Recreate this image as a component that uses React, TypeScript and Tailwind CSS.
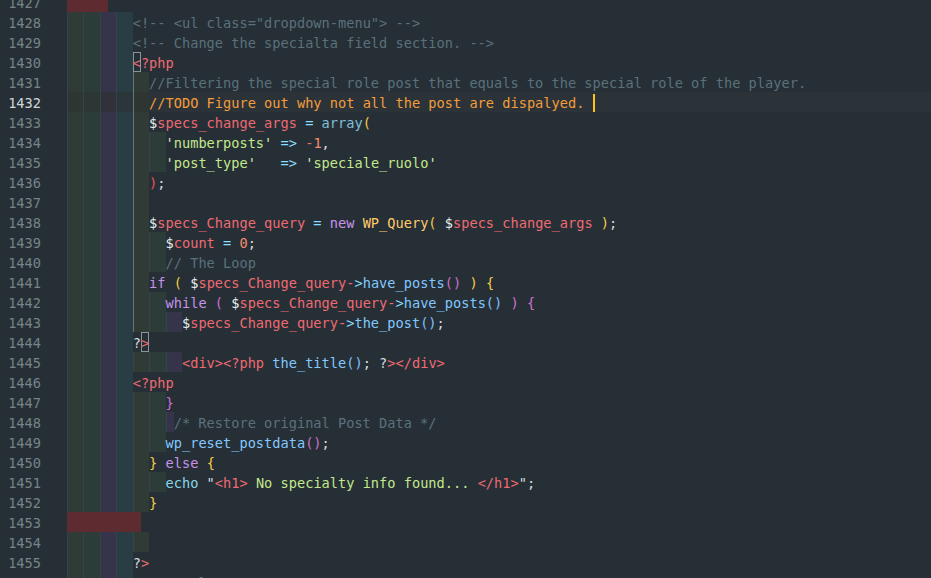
import React from "react";

type Tok = [string, string, boolean?];

const K: Record<string, string> = {
  t: "text-[#d6dee0]",
  d: "text-[#e6eeee]",
  v: "text-[#ef6a73]",
  o: "text-[#89ddff]",
  c: "text-[#5a717c]",
  todo: "text-[#f39c3c]",
  k: "text-[#c792ea]",
  f: "text-[#82c8ff]",
  a: "text-[#80c0d8]",
  s: "text-[#c3e88d]",
  q: "text-[#d8e8c4]",
  n: "text-[#f78c6c]",
  y: "text-[#f7cc45]",
  p: "text-[#d070d0]",
  b: "text-[#7ec0ff]",
  h: "text-[#ef6a73]",
  r: "text-[#e8505c]",
  e: "text-[#89d8e8]",
  cls: "text-[#ffcb6b]",
};

// indent rainbow
const bands = ["bg-[#2f3b34]", "bg-[#2b3c39]", "bg-[#35344a]", "bg-[#293d44]"];
const bandsCur = ["bg-[#2e3632]", "bg-[#2c3735]", "bg-[#303139]", "bg-[#2b363a]"];

type LineDef = {
  n: number;
  ind: number;
  red?: boolean;
  act?: boolean;
  cur?: boolean;
  toks?: Tok[];
};

const lines: LineDef[] = [
  { n: 1427, ind: 5, red: true },
  { n: 1428, ind: 8, toks: [['<!-- <ul class="dropdown-menu"> -->', "c"]] },
  { n: 1429, ind: 8, toks: [["<!-- Change the specialta field section. -->", "c"]] },
  { n: 1430, ind: 8, toks: [["<", "h", true], ["?php", "h"]] },
  {
    n: 1431,
    ind: 10,
    act: true,
    toks: [["//Filtering the special role post that equals to the special role of the player.", "c"]],
  },
  { n: 1432, ind: 10, act: true, cur: true, toks: [["//TODO Figure out why not all the post are dispalyed. ", "todo"]] },
  {
    n: 1433,
    ind: 10,
    act: true,
    toks: [["$", "d"], ["specs_change_args", "v"], [" = ", "o"], ["array", "a"], ["(", "y"]],
  },
  {
    n: 1434,
    ind: 12,
    act: true,
    toks: [["'", "q"], ["numberposts", "s"], ["'", "q"], [" => ", "o"], ["-", "v"], ["1", "n"], [",", "t"]],
  },
  {
    n: 1435,
    ind: 12,
    act: true,
    toks: [["'", "q"], ["post_type", "s"], ["'", "q"], ["   => ", "o"], ["'", "q"], ["speciale_ruolo", "s"], ["'", "q"]],
  },
  { n: 1436, ind: 10, act: true, toks: [[")", "r"], [";", "t"]] },
  { n: 1437, ind: 10, act: true },
  {
    n: 1438,
    ind: 10,
    act: true,
    toks: [
      ["$", "d"], ["specs_Change_query", "v"], [" = ", "o"], ["new", "k"], [" ", "t"], ["WP_Query", "cls"],
      ["(", "y"], [" ", "t"], ["$", "d"], ["specs_change_args", "v"], [" ", "t"], [")", "y"], [";", "t"],
    ],
  },
  { n: 1439, ind: 12, act: true, toks: [["$", "d"], ["count", "v"], [" = ", "o"], ["0", "n"], [";", "t"]] },
  { n: 1440, ind: 12, act: true, toks: [["// The Loop", "c"]] },
  {
    n: 1441,
    ind: 10,
    act: true,
    toks: [
      ["if", "k"], [" ", "t"], ["(", "y"], [" ", "t"], ["$", "d"], ["specs_Change_query", "v"], ["-", "v"], [">", "o"],
      ["have_posts", "f"], ["()", "p"], [" ", "t"], [")", "y"], [" ", "t"], ["{", "y"],
    ],
  },
  {
    n: 1442,
    ind: 12,
    act: true,
    toks: [
      ["while", "k"], [" ", "t"], ["(", "p"], [" ", "t"], ["$", "d"], ["specs_Change_query", "v"], ["-", "v"], [">", "o"],
      ["have_posts", "f"], ["()", "b"], [" ", "t"], [")", "p"], [" ", "t"], ["{", "p"],
    ],
  },
  {
    n: 1443,
    ind: 14,
    act: true,
    toks: [["$", "d"], ["specs_Change_query", "v"], ["-", "v"], [">", "o"], ["the_post", "f"], ["()", "b"], [";", "t"]],
  },
  { n: 1444, ind: 8, toks: [["?", "t"], [">", "h", true]] },
  {
    n: 1445,
    ind: 14,
    toks: [
      ["<div>", "h"], ["<?php", "h"], [" ", "t"], ["the_title", "f"], ["()", "b"], [";", "t"], [" ", "t"],
      ["?", "t"], [">", "h"], ["</div>", "h"],
    ],
  },
  { n: 1446, ind: 8, toks: [["<?php", "h"]] },
  { n: 1447, ind: 12, toks: [["}", "p"]] },
  { n: 1448, ind: 13, toks: [["/* Restore original Post Data */", "c"]] },
  { n: 1449, ind: 12, toks: [["wp_reset_postdata", "f"], ["()", "p"], [";", "t"]] },
  { n: 1450, ind: 10, toks: [["}", "y"], [" ", "t"], ["else", "k"], [" ", "t"], ["{", "y"]] },
  {
    n: 1451,
    ind: 12,
    toks: [
      ["echo", "e"], [" ", "t"], ['"', "t"], ["<h1>", "h"], [" No specialty info found... ", "s"], ["</h1>", "h"],
      ['"', "t"], [";", "t"],
    ],
  },
  { n: 1452, ind: 10, toks: [["}", "y"]] },
  { n: 1453, ind: 9, red: true },
  { n: 1454, ind: 10 },
  { n: 1455, ind: 8, toks: [["?", "t"], [">", "h"]] },
  { n: 1456, ind: 8, toks: [["<!-- </ul> -->", "c"]] },
];

const Indent = ({ l }: { l: LineDef }) => {
  if (l.red) {
    return <div className={`${l.ind === 5 ? "w-[5ch]" : "w-[9ch]"} h-[20px] shrink-0 bg-[#5e2b30]`} />;
  }
  const full = Math.floor(l.ind / 2);
  const out = [];
  for (let i = 0; i < full; i++) {
    const col = (l.cur ? bandsCur : bands)[i % 4];
    const guide = l.act && i === 4 ? "shadow-[inset_1px_0_0_#66777a]" : "shadow-[inset_1px_0_0_#35434a]";
    out.push(<div key={i} className={`w-[2ch] h-[20px] shrink-0 ${col} ${guide}`} />);
  }
  if (l.ind % 2 === 1) {
    out.push(
      <div key="half" className={`w-[1ch] h-[20px] shrink-0 ${bands[full % 4]} shadow-[inset_1px_0_0_#35434a]`} />
    );
  }
  return <>{out}</>;
};

const Line = ({ l }: { l: LineDef }) => (
  <div className="flex h-[20px]">
    <div
      className={`w-[67px] shrink-0 pr-[26px] text-right leading-[23px] ${l.cur ? "text-[#d0d6d8]" : "text-[#76838a]"}`}
    >
      {l.n}
    </div>
    <div className={`flex flex-1 ${l.cur ? "bg-[#2b3338]" : ""}`}>
      <Indent l={l} />
      <div className="whitespace-pre leading-[23px]">
        {l.toks?.map(([txt, k, box], i) =>
          box ? (
            <span
              key={i}
              className={`${K[k]} inline-block h-[20px] align-top leading-[23px] shadow-[inset_0_0_0_1px_#8a9599]`}
            >
              {txt}
            </span>
          ) : (
            <span key={i} className={K[k]}>
              {txt}
            </span>
          )
        )}
        {l.cur && <span className="inline-block w-[2px] h-[18px] align-[-4px] bg-[#ffc619]" />}
      </div>
    </div>
  </div>
);

export default function App() {
  return (
    <div className="h-[578px] w-full overflow-hidden bg-[#262f35] font-['DejaVu_Sans_Mono',monospace] text-[13.65px] leading-[20px]">
      <div className="-mt-[8px]">
        {lines.map((l) => (
          <Line key={l.n} l={l} />
        ))}
      </div>
    </div>
  );
}
